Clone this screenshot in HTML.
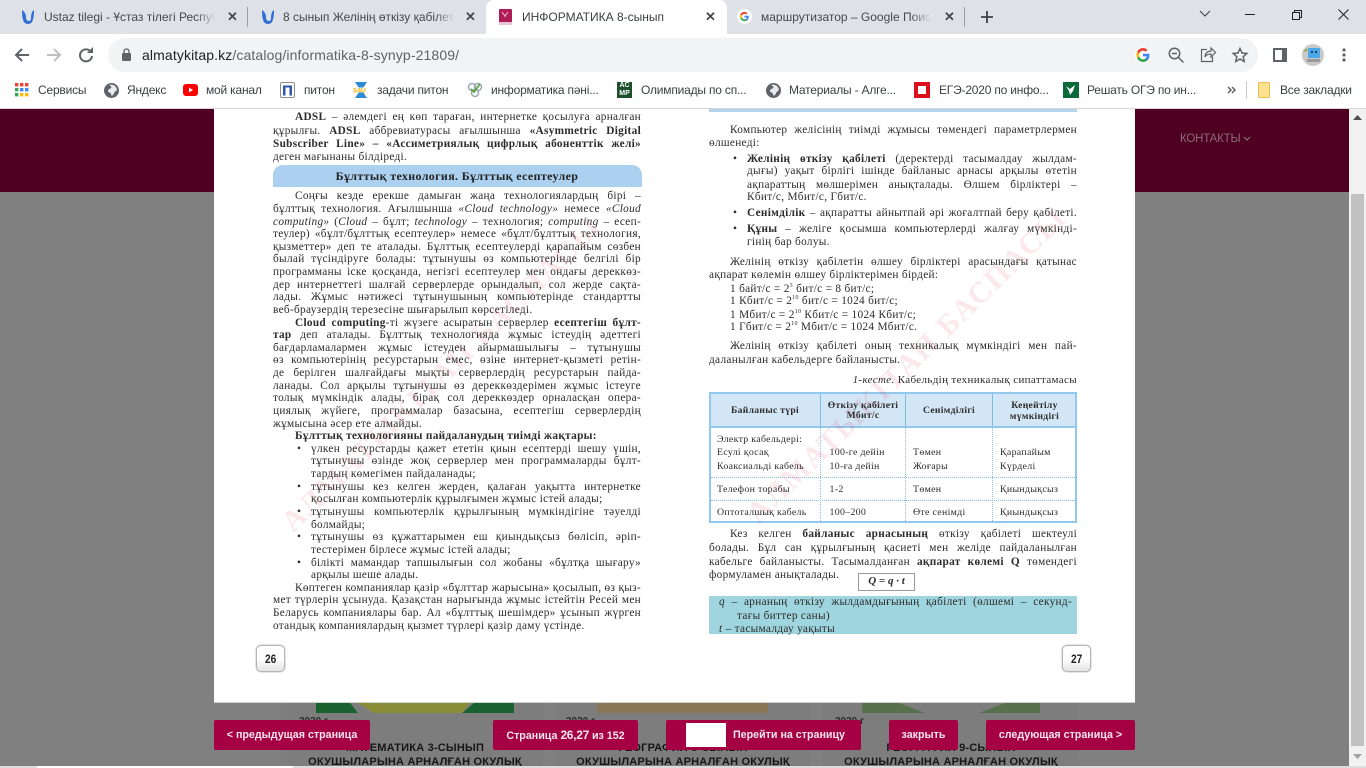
<!DOCTYPE html>
<html lang="kk"><head><meta charset="utf-8"><title>ИНФОРМАТИКА 8-сынып</title>
<style>
html,body{margin:0;padding:0;width:1366px;height:768px;overflow:hidden;background:#808080}
body{position:relative;font-family:"Liberation Sans","Noto Sans CJK SC",sans-serif}
.a{position:absolute}
svg.a{overflow:visible}
.tx{position:absolute;white-space:nowrap;color:#3c4043;font-size:12px;line-height:16px}
.tab{font-size:12px;top:9px;line-height:16px;color:#45484d;overflow:hidden}
.fade{position:absolute;top:8px;width:20px;height:18px;background:linear-gradient(90deg,rgba(222,225,230,0),#dee1e6)}
.bm{top:82px;font-size:12px;color:#3c4043;letter-spacing:-.2px}
.x{font-size:13px}
#pg{position:absolute;left:214px;top:108px;width:921px;height:595px;background:#fff}
#txt{position:absolute;left:0;top:0;width:1366px;height:768px;filter:blur(.3px);font-family:"Liberation Serif","Noto Serif CJK SC",serif;font-size:11.3px;letter-spacing:.3px;color:#2c2c2c}
#txt div{position:absolute;white-space:nowrap;height:13px;line-height:13px}
.L{left:273px;width:368px}.Li{left:295px;width:346px}.Lb{left:311px;width:330px}
.R{left:709px;width:368px}.Ri{left:730px;width:347px}.Rb{left:747px;width:330px}
.j{text-align:justify;text-align-last:justify}
#txt .c{font-size:9.9px;letter-spacing:.3px}
#txt .h{font-size:9.6px;font-weight:bold;text-align:center;letter-spacing:.3px}
sup{font-size:6px;line-height:0}
.num{position:absolute;width:27px;height:25px;border:1px solid #b5b5b5;border-radius:5px;background:linear-gradient(#fff 50%,#e4e4e4);font:bold 12px/26px "Liberation Sans",sans-serif;color:#222;text-align:center;box-shadow:0 0 1.5px #999}
.num span{display:inline-block;transform:scaleX(.85)}
.btn{position:absolute;top:720px;height:30px;line-height:31px;background:#a50044;border-radius:2px;color:#f6e6ec;font-size:10.7px;font-weight:bold;text-align:center;white-space:nowrap}
.ti{position:absolute;white-space:nowrap;font-weight:bold;font-size:11px;color:#161616;text-align:center;width:256px;height:14px;line-height:14px;letter-spacing:.2px}
</style></head><body>

<!-- page backdrop -->
<div class="a" style="left:0;top:108px;width:1349px;height:84px;background:#4f0021"></div>
<div class="a" style="left:1180px;top:131px;font-size:11.5px;letter-spacing:-.2px;line-height:16px;color:#8d6b79;white-space:nowrap">КОНТАКТЫ</div>
<svg class="a" style="left:1243px;top:136px" width="8" height="6"><path d="M1 1l3 3 3-3" fill="none" stroke="#8d6b79" stroke-width="1.2"/></svg>

<!-- cards behind -->
<div class="a" style="left:287px;top:703px;width:256px;height:65px;background:#7d7d7d"></div>
<div class="a" style="left:555px;top:703px;width:256px;height:65px;background:#7d7d7d"></div>
<div class="a" style="left:822px;top:703px;width:256px;height:65px;background:#7d7d7d"></div>
<svg class="a" style="left:316px;top:703px" width="198" height="10"><rect width="198" height="10" fill="#7d7d7d"/><path d="M0 0h34l8 10H0zM198 0h-40l-12 10h52z" fill="#19622f"/><path d="M42 0h112l-8 10H58z" fill="#8a8c37"/></svg>
<div class="a" style="left:597px;top:703px;width:171px;height:10px;background:#8a7656"></div>
<svg class="a" style="left:862px;top:703px" width="178" height="10"><rect width="178" height="10" fill="#56714c"/><path d="M37 0h106l-26 10H63z" fill="#7d7d7d"/></svg>
<div class="a" style="left:299px;top:716px;font-size:10px;font-weight:bold;color:#2c2c2c">2020 г</div>
<div class="a" style="left:566px;top:716px;font-size:10px;font-weight:bold;color:#2c2c2c">2020 г</div>
<div class="a" style="left:835px;top:716px;font-size:10px;font-weight:bold;color:#2c2c2c">2020 г</div>
<div class="ti" style="left:287px;top:741px">МАТЕМАТИКА 3-СЫНЫП</div>
<div class="ti" style="left:287px;top:755px">ОКУШЫЛАРЫНА АРНАЛҒАН ОКУЛЫҚ</div>
<div class="ti" style="left:555px;top:741px">ГЕОГРАФИЯ 8-СЫНЫП</div>
<div class="ti" style="left:555px;top:755px">ОКУШЫЛАРЫНА АРНАЛҒАН ОКУЛЫҚ</div>
<div class="ti" style="left:823px;top:741px">ГЕОГРАФИЯ 9-СЫНЫП</div>
<div class="ti" style="left:823px;top:755px">ОКУШЫЛАРЫНА АРНАЛҒАН ОКУЛЫҚ</div>
<div class="a" style="left:0;top:766px;width:1366px;height:2px;background:#dcdcdc"></div>
<div class="a" style="left:37px;top:766px;width:256px;height:2px;background:#fff"></div>

<!-- scrollbar -->
<div class="a" style="left:1349px;top:108px;width:17px;height:658px;background:#f1f1f1"></div>
<div class="a" style="left:1351px;top:194px;width:13px;height:552px;background:#c1c1c1"></div>
<svg class="a" style="left:1353px;top:115px" width="9" height="6"><path d="M4.500 0L9 5H0z" fill="#505050"/></svg>
<svg class="a" style="left:1353px;top:754px" width="9" height="6"><path d="M4.500 5L9 0H0z" fill="#a3a3a3"/></svg>

<!-- book page -->
<div id="pg"></div>
<div class="a" style="left:214px;top:702px;width:921px;height:1px;background:#cfcfcf"></div>
<div class="a" style="left:709px;top:108px;width:368px;height:4px;background:#b4d4ee"></div>
<div class="a" style="left:273px;top:165px;width:369px;height:22px;background:#acd0ef;border-radius:10px 10px 0 0"></div>
<div class="a" style="left:709px;top:392px;width:364px;height:127px;border:2px solid #92c8ee"></div>
<div class="a" style="left:711px;top:394px;width:364px;height:32px;background:#d3e6f6;border-bottom:2px solid #92c8ee"></div>
<div class="a" style="left:820px;top:394px;height:32px;width:1px;background:#7fbde8"></div>
<div class="a" style="left:905px;top:394px;height:32px;width:1px;background:#7fbde8"></div>
<div class="a" style="left:992px;top:394px;height:32px;width:1px;background:#7fbde8"></div>
<div class="a" style="left:820px;top:428px;height:93px;border-left:1px dotted #80bde6"></div>
<div class="a" style="left:905px;top:428px;height:93px;border-left:1px dotted #80bde6"></div>
<div class="a" style="left:992px;top:428px;height:93px;border-left:1px dotted #80bde6"></div>
<div class="a" style="left:711px;top:477px;width:364px;border-top:1px dotted #80bde6"></div>
<div class="a" style="left:711px;top:500px;width:364px;border-top:1px dotted #80bde6"></div>
<div class="a" style="left:858px;top:573px;width:55px;height:16px;border:1px solid #9a9a9a;background:#fff"></div>
<div class="a" style="left:709px;top:596px;width:368px;height:38px;background:#9fd5df"></div>

<!-- watermarks -->
<div class="a" style="left:287px;top:527px;width:1px;height:1px;transform:rotate(-44.5deg);transform-origin:0 0;white-space:nowrap;font:bold 30px/0 'Liberation Serif',serif;letter-spacing:1.8px;color:rgba(205,30,70,.1)">АЛМАТЫКІТАП БАСПАСЫ</div>
<div class="a" style="left:752px;top:518px;width:1px;height:1px;transform:rotate(-44.5deg);transform-origin:0 0;white-space:nowrap;font:bold 30px/0 'Liberation Serif',serif;letter-spacing:1.8px;color:rgba(205,30,70,.1)">АЛМАТЫКІТАП БАСПАСЫ</div>

<div id="txt">
<div class="Li j" style="top:111px"><b>ADSL</b> – әлемдегі ең көп тараған, интернетке қосылуға арналған</div>
<div class="L j" style="top:124.5px">құрылғы. <b>ADSL</b> аббревиатурасы ағылшынша <b>«Asymmetric Digital</b></div>
<div class="L j" style="top:137.5px"><b>Subscriber Line» – «Ассиметриялық цифрлық абоненттік желі»</b></div>
<div class="L" style="top:150.5px">деген мағынаны білдіреді.</div>
<div class="L" style="top:169.5px;text-align:center;font-weight:bold;font-size:12px;letter-spacing:.35px;color:#222">Бұлттық технология. Бұлттық есептеулер</div>

<div class="Li j" style="top:190.2px">Соңғы кезде ерекше дамыған жаңа технологиялардың бірі –</div>
<div class="L j" style="top:202.8px">бұлттық технология. Ағылшынша <i>«Cloud technology»</i> немесе <i>«Cloud</i></div>
<div class="L j" style="top:215.5px"><i>computing»</i> (<i>Cloud</i> – бұлт; <i>technology</i> – технология; <i>computing</i> – есеп-</div>
<div class="L j" style="top:228.1px">теулер) «бұлт/бұлттық есептеулер» немесе «бұлт/бұлттық технология,</div>
<div class="L j" style="top:240.7px">қызметтер» деп те аталады. Бұлттық есептеулерді қарапайым сөзбен</div>
<div class="L j" style="top:253.4px">былай түсіндіруге болады: тұтынушы өз компьютерінде белгілі бір</div>
<div class="L j" style="top:266px">программаны іске қосқанда, негізгі есептеулер мен ондағы дереккөз-</div>
<div class="L j" style="top:278.6px">дер интернеттегі шалғай серверлерде орындалып, сол жерде сақта-</div>
<div class="L j" style="top:291.2px">лады. Жұмыс нәтижесі тұтынушының компьютерінде стандартты</div>
<div class="L" style="top:303.9px">веб-браузердің терезесіне шығарылып көрсетіледі.</div>
<div class="Li j" style="top:316.5px"><b>Cloud computing</b>-ті жүзеге асыратын серверлер <b>есептегіш бұлт-</b></div>
<div class="L j" style="top:329.1px"><b>тар</b> деп аталады. Бұлттық технологияда жұмыс істеудің әдеттегі</div>
<div class="L j" style="top:341.8px">бағдарламалармен жұмыс істеуден айырмашылығы – тұтынушы</div>
<div class="L j" style="top:354.4px">өз компьютерінің ресурстарын емес, өзіне интернет-қызметі ретін-</div>
<div class="L j" style="top:367px">де берілген шалғайдағы мықты серверлердің ресурстарын пайда-</div>
<div class="L j" style="top:379.7px">ланады. Сол арқылы тұтынушы өз дереккөздерімен жұмыс істеуге</div>
<div class="L j" style="top:392.3px">толық мүмкіндік алады, бірақ сол дереккөздер орналасқан опера-</div>
<div class="L j" style="top:404.9px">циялық жүйеге, программалар базасына, есептегіш серверлердің</div>
<div class="L" style="top:417.5px">жұмысына әсер ете алмайды.</div>
<div class="Li" style="top:430.2px"><b>Бұлттық технологияны пайдаланудың тиімді жақтары:</b></div>
<div style="left:297px;top:442.8px">•</div>
<div class="Lb j" style="top:442.8px">үлкен ресурстарды қажет ететін қиын есептерді шешу үшін,</div>
<div class="Lb j" style="top:455.4px">тұтынушы өзінде жоқ серверлер мен программаларды бұлт-</div>
<div class="Lb" style="top:468.1px">тардың көмегімен пайдаланады;</div>
<div style="left:297px;top:480.7px">•</div>
<div class="Lb j" style="top:480.7px">тұтынушы кез келген жерден, қалаған уақытта интернетке</div>
<div class="Lb" style="top:493.3px">қосылған компьютерлік құрылғымен жұмыс істей алады;</div>
<div style="left:297px;top:506px">•</div>
<div class="Lb j" style="top:506px">тұтынушы компьютерлік құрылғының мүмкіндігіне тәуелді</div>
<div class="Lb" style="top:518.6px">болмайды;</div>
<div style="left:297px;top:531.2px">•</div>
<div class="Lb j" style="top:531.2px">тұтынушы өз құжаттарымен еш қиындықсыз бөлісіп, әріп-</div>
<div class="Lb" style="top:543.8px">тестерімен бірлесе жұмыс істей алады;</div>
<div style="left:297px;top:556.5px">•</div>
<div class="Lb j" style="top:556.5px">білікті мамандар тапшылығын сол жобаны «бұлтқа шығару»</div>
<div class="Lb" style="top:569.1px">арқылы шеше алады.</div>
<div class="Li j" style="top:581.7px">Көптеген компаниялар қазір «бұлттар жарысына» қосылып, өз қыз-</div>
<div class="L j" style="top:594.4px">мет түрлерін ұсынуда. Қазақстан нарығында жұмыс істейтін Ресей мен</div>
<div class="L j" style="top:607px">Беларусь компаниялары бар. Ал «бұлттық шешімдер» ұсынып жүрген</div>
<div class="L" style="top:619.6px">отандық компаниялардың қызмет түрлері қазір даму үстінде.</div>

<div class="Ri j" style="top:124.2px">Компьютер желісінің тиімді жұмысы төмендегі параметрлермен</div>
<div class="R" style="top:136.8px">өлшенеді:</div>
<div style="left:733px;top:152.5px">•</div>
<div class="Rb j" style="top:152.5px"><b>Желінің өткізу қабілеті</b> (деректерді тасымалдау жылдам-</div>
<div class="Rb j" style="top:165.2px">дығы) уақыт бірлігі ішінде байланыс арнасы арқылы өтетін</div>
<div class="Rb j" style="top:178.5px">ақпараттың мөлшерімен анықталады. Өлшем бірліктері –</div>
<div class="Rb" style="top:191.2px">Кбит/с, Мбит/с, Гбит/с.</div>
<div style="left:733px;top:206.8px">•</div>
<div class="Rb j" style="top:206.8px"><b>Сенімділік</b> – ақпаратты айнытпай әрі жоғалтпай беру қабілеті.</div>
<div style="left:733px;top:222.5px">•</div>
<div class="Rb j" style="top:222.5px"><b>Құны</b> – желіге қосымша компьютерлерді жалғау мүмкінді-</div>
<div class="Rb" style="top:235.8px">гінің бар болуы.</div>
<div class="Ri j" style="top:255.8px">Желінің өткізу қабілетін өлшеу бірліктері арасындағы қатынас</div>
<div class="R" style="top:269.2px">ақпарат көлемін өлшеу бірліктерімен бірдей:</div>
<div class="Ri" style="top:282.5px">1 байт/с = 2<sup>3</sup> бит/с = 8 бит/с;</div>
<div class="Ri" style="top:295.2px">1 Кбит/с = 2<sup>10</sup> бит/с = 1024 бит/с;</div>
<div class="Ri" style="top:308.5px">1 Мбит/с = 2<sup>10</sup> Кбит/с = 1024 Кбит/с;</div>
<div class="Ri" style="top:321.2px">1 Гбит/с = 2<sup>10</sup> Мбит/с = 1024 Мбит/с.</div>
<div class="Ri j" style="top:340.2px">Желінің өткізу қабілеті оның техникалық мүмкіндігі мен пай-</div>
<div class="R" style="top:353.5px">даланылған кабельдерге байланысты.</div>
<div class="R" style="top:373.5px;text-align:right;font-size:11px;letter-spacing:.35px"><i>1-кесте.</i> Кабельдің техникалық сипаттамасы</div>

<div class="h" style="left:710px;width:110px;top:403.5px">Байланыс түрі</div>
<div class="h" style="left:821px;width:84px;top:398.5px">Өткізу қабілеті</div>
<div class="h" style="left:821px;width:84px;top:409px">Мбит/с</div>
<div class="h" style="left:906px;width:86px;top:403.5px">Сенімділігі</div>
<div class="h" style="left:993px;width:83px;top:398.5px">Кеңейтілу</div>
<div class="h" style="left:993px;width:83px;top:409.5px">мүмкіндігі</div>
<div class="c" style="left:717px;top:432.5px">Электр кабельдері:</div>
<div class="c" style="left:717px;top:446.2px">Есулі қосақ</div>
<div class="c" style="left:717px;top:460.2px">Коаксиальді кабель</div>
<div class="c" style="left:717px;top:482.8px">Телефон торабы</div>
<div class="c" style="left:717px;top:505.5px">Оптоталшық кабель</div>
<div class="c" style="left:829.5px;top:446.2px">100-ге дейін</div>
<div class="c" style="left:829.5px;top:460.2px">10-ға дейін</div>
<div class="c" style="left:829.5px;top:482.8px">1-2</div>
<div class="c" style="left:829.5px;top:505.5px">100–200</div>
<div class="c" style="left:913px;top:446.2px">Төмен</div>
<div class="c" style="left:913px;top:460.2px">Жоғары</div>
<div class="c" style="left:913px;top:482.8px">Төмен</div>
<div class="c" style="left:913px;top:505.5px">Өте сенімді</div>
<div class="c" style="left:1000px;top:446.2px">Қарапайым</div>
<div class="c" style="left:1000px;top:460.2px">Күрделі</div>
<div class="c" style="left:1000px;top:482.8px">Қиындықсыз</div>
<div class="c" style="left:1000px;top:505.5px">Қиындықсыз</div>

<div class="Ri j" style="top:527.8px">Кез келген <b>байланыс арнасының</b> өткізу қабілеті шектеулі</div>
<div class="R j" style="top:542.2px">болады. Бұл сан құрылғының қасиеті мен желіде пайдаланылған</div>
<div class="R j" style="top:555.8px">кабельге байланысты. Тасымалданған <b>ақпарат көлемі Q</b> төмендегі</div>
<div class="R" style="top:569.2px">формуламен анықталады.</div>
<div style="left:858px;width:57px;top:575px;text-align:center;font-weight:bold;font-style:italic;font-size:11px;letter-spacing:0">Q = q · t</div>
<div style="left:719px;width:353px;top:596.2px" class="j"><i>q</i> – арнаның өткізу жылдамдығының қабілеті (өлшемі – секунд-</div>
<div style="left:737px;top:609.5px">тағы биттер саны)</div>
<div style="left:719px;top:622.8px"><i>t</i> – тасымалдау уақыты</div>
</div>

<div class="num" style="left:256px;top:645px"><span>26</span></div>
<div class="num" style="left:1062px;top:645px"><span>27</span></div>

<!-- bottom nav -->
<div class="btn" style="left:214px;width:156px">&lt; предыдущая страница</div>
<div class="btn" style="left:493px;width:145px">Страница <span style="font-size:12px;letter-spacing:-.3px">26,27</span> из 152</div>
<div class="btn" style="left:666px;width:195px;text-align:left;text-indent:67px">Перейти на страницу</div>
<div class="a" style="left:686px;top:723px;width:40px;height:24px;background:#fff"></div>
<div class="btn" style="left:889px;width:69px">закрыть</div>
<div class="btn" style="left:986px;width:149px">следующая страница &gt;</div>

<!-- browser chrome -->
<div class="a" style="left:0;top:0;width:1366px;height:34px;background:#dee1e6"></div>
<div class="a" style="left:0;top:34px;width:1366px;height:74px;background:#fff"></div>
<div class="a" style="left:0;top:107.5px;width:1366px;height:1px;background:#d6d6d6"></div>
<div class="a" style="left:486px;top:0;width:241px;height:34px;background:#fff;border-radius:8px 8px 0 0"></div>
<div class="a" style="left:247px;top:7px;width:1px;height:20px;background:#9aa0a6"></div>
<div class="a" style="left:964px;top:7px;width:1px;height:20px;background:#9aa0a6"></div>

<svg class="a" style="left:21px;top:9px" width="14" height="16" viewBox="0 0 14 16"><path d="M1 1c0 8 1 14 6 14s6-6 6-14c-2 1-3 4-3 8 0 2-1 3-2.500 3S5 10 5 8C5 5 3 2 1 1z" fill="#2f6fd6"/></svg>
<div class="tx tab" style="left:44px;width:170px">Ustaz tilegi - Ұстаз тілегі Респуб</div>
<div class="fade" style="left:196px"></div>
<div class="tx x" style="left:227px;top:9px;font-weight:bold;color:#45484d">✕</div>
<svg class="a" style="left:261px;top:9px" width="14" height="16" viewBox="0 0 14 16"><path d="M1 1c0 8 1 14 6 14s6-6 6-14c-2 1-3 4-3 8 0 2-1 3-2.500 3S5 10 5 8C5 5 3 2 1 1z" fill="#2f6fd6"/></svg>
<div class="tx tab" style="left:283px;width:170px">8 сынып Желінің өткізу қабілет</div>
<div class="fade" style="left:435px"></div>
<div class="tx x" style="left:465px;top:9px;font-weight:bold;color:#45484d">✕</div>
<svg class="a" style="left:498px;top:8px" width="15" height="18" viewBox="0 0 15 18"><rect x="1" y="1" width="13" height="16" rx="1" fill="#b01c56"/><rect x="1" y="14" width="13" height="3" fill="#e8c3d3"/><path d="M4 4l3 4 3-4M7 8v1" stroke="#f2c6d6" fill="none"/></svg>
<div class="tx tab" style="left:522px;color:#3c4043;width:170px">ИНФОРМАТИКА 8-сынып</div>
<div class="tx x" style="left:705px;top:9px;font-weight:bold;color:#45484d">✕</div>
<svg class="a" style="left:737px;top:9px" width="15" height="15" viewBox="0 0 16 16"><circle cx="8" cy="8" r="8" fill="#fff"/><path d="M12.600 8.200c0-.4 0-.7-.1-1H8v1.900h2.600c-.1.600-.5 1.200-1 1.500v1.200h1.600c1-.9 1.400-2.200 1.400-3.600z" fill="#4285f4"/><path d="M8 13c1.300 0 2.400-.4 3.200-1.200l-1.600-1.200c-.4.300-1 .5-1.600.5-1.300 0-2.300-.8-2.700-2H3.700v1.300C4.500 12 6.100 13 8 13z" fill="#34a853"/><path d="M5.300 9.100c-.2-.7-.2-1.400 0-2.100V5.700H3.700c-.7 1.400-.7 3.200 0 4.600z" fill="#fbbc05"/><path d="M8 5.200c.7 0 1.300.3 1.800.7l1.400-1.400C10.400 3.600 9.200 3 8 3 6.100 3 4.500 4 3.700 5.700L5.300 7c.4-1.100 1.400-1.800 2.700-1.800z" fill="#ea4335"/></svg>
<div class="tx tab" style="left:761px;width:170px">маршрутизатор – Google Поиск</div>
<div class="fade" style="left:911px"></div>
<div class="tx x" style="left:944px;top:9px;font-weight:bold;color:#45484d">✕</div>
<svg class="a" style="left:980px;top:10px" width="14" height="14"><path d="M7 1v12M1 7h12" stroke="#3c4043" stroke-width="1.800"/></svg>

<svg class="a" style="left:1199px;top:10px" width="12" height="8"><path d="M1 1l5 5 5-5" fill="none" stroke="#3c4043"/></svg>
<div class="a" style="left:1245px;top:14px;width:10px;height:1px;background:#202124"></div>
<svg class="a" style="left:1291px;top:9px" width="12" height="12"><path d="M1.500 3.500h7v7h-7zM3.500 3.500v-2h7v7h-2" fill="none" stroke="#202124"/></svg>
<svg class="a" style="left:1338px;top:9px" width="11" height="11"><path d="M.5.500l10 10M10.500.500l-10 10" stroke="#202124"/></svg>

<svg class="a" style="left:14px;top:47px" width="16" height="16"><path d="M15 8H2M8 2L2 8l6 6" fill="none" stroke="#5f6368" stroke-width="2"/></svg>
<svg class="a" style="left:46px;top:47px" width="16" height="16"><path d="M1 8h13M8 2l6 6-6 6" fill="none" stroke="#bdc1c6" stroke-width="2"/></svg>
<svg class="a" style="left:78px;top:47px" width="16" height="16"><path d="M13 5A6 6 0 1 0 14 9" fill="none" stroke="#5f6368" stroke-width="2"/><path d="M9 6h6V0z" fill="#5f6368"/></svg>

<div class="a" style="left:108px;top:38px;width:1150px;height:34px;background:#f1f3f4;border-radius:17px"></div>
<svg class="a" style="left:122px;top:48px" width="9" height="13"><rect y="5" width="9" height="8" rx="1" fill="#5f6368"/><path d="M2 6V3.500a2.500 2.500 0 0 1 5 0V6" fill="none" stroke="#5f6368" stroke-width="1.300"/></svg>
<div class="tx" style="left:142px;top:47px;font-size:14px;letter-spacing:.12px;color:#202124">almatykitap.kz<span style="color:#5f6368">/catalog/informatika-8-synyp-21809/</span></div>

<svg class="a" style="left:1135px;top:47px" width="16" height="16" viewBox="0 0 16 16"><circle cx="8" cy="8" r="8" fill="#fff"/><path d="M14.600 8.200c0-.5 0-.9-.1-1.400H8v2.600h3.700c-.2.900-.7 1.600-1.400 2.100v1.700h2.300c1.300-1.200 2-3 2-5z" fill="#4285f4"/><path d="M8 15c1.900 0 3.400-.6 4.600-1.700l-2.300-1.700c-.6.400-1.400.7-2.300.7-1.800 0-3.300-1.200-3.800-2.800H2.100v1.800C3.200 13.500 5.400 15 8 15z" fill="#34a853"/><path d="M4.200 9.500c-.3-.9-.3-1.900 0-2.900V4.800H2.100c-1 1.900-1 4.500 0 6.400z" fill="#fbbc05"/><path d="M8 3.800c1 0 1.900.4 2.600 1l2-2C11.400 1.700 9.800 1 8 1 5.400 1 3.200 2.500 2.100 4.800l2.100 1.800C4.700 5 6.200 3.800 8 3.800z" fill="#ea4335"/></svg>
<svg class="a" style="left:1168px;top:47px" width="16" height="16"><circle cx="6.500" cy="6.500" r="5.200" fill="none" stroke="#5f6368" stroke-width="1.500"/><path d="M10.500 10.500l5 5M4 6.500h5" stroke="#5f6368" stroke-width="1.500"/></svg>
<svg class="a" style="left:1200px;top:46px" width="16" height="17"><path d="M7 3.500H1.500v12h11v-5" fill="none" stroke="#5f6368" stroke-width="1.200"/><path d="M5 11c0-4 3-6 6-6V2l4.500 4.500L11 11V8c-3 0-5 1-6 3z" fill="none" stroke="#5f6368" stroke-width="1.200"/></svg>
<svg class="a" style="left:1232px;top:47px" width="16" height="16"><path d="M8 1.500l2 4.500 4.800.5-3.600 3.200 1 4.800L8 12l-4.200 2.500 1-4.800L1.200 6.500 6 6z" fill="none" stroke="#5f6368" stroke-width="1.500"/></svg>
<svg class="a" style="left:1273px;top:48px" width="14" height="14"><rect width="14" height="14" fill="#5f6368"/><rect x="2" y="2" width="7" height="10" fill="#fff"/></svg>
<svg class="a" style="left:1302px;top:44px" width="22" height="22"><circle cx="11" cy="11" r="11" fill="#c9c9c9"/><rect x="6" y="4" width="12" height="10" rx="1" fill="#4aa7e8"/><circle cx="10" cy="8" r="1" fill="#123"/><circle cx="14" cy="8" r="1" fill="#123"/><rect x="5" y="15" width="13" height="3" fill="#999"/><path d="M1 7l4-3v4z" fill="#8fb04b"/></svg>
<svg class="a" style="left:1342px;top:48px" width="4" height="14"><circle cx="2" cy="2" r="1.600" fill="#5f6368"/><circle cx="2" cy="7" r="1.600" fill="#5f6368"/><circle cx="2" cy="12" r="1.600" fill="#5f6368"/></svg>

<!-- bookmarks -->
<svg class="a" style="left:15px;top:83px" width="14" height="14"><g fill="#ea4335"><rect width="3.400" height="3.400"/><rect x="5" width="3.400" height="3.400"/><rect x="10" width="3.400" height="3.400"/></g><g fill="#34a853"><rect y="5" width="3.400" height="3.400"/><rect y="10" width="3.400" height="3.400" /></g><g fill="#4285f4"><rect x="5" y="5" width="3.400" height="3.400"/><rect x="10" y="5" width="3.400" height="3.400"/></g><g fill="#fbbc05"><rect x="5" y="10" width="3.400" height="3.400"/><rect x="10" y="10" width="3.400" height="3.400"/></g></svg>
<div class="tx bm" style="left:38px">Сервисы</div>
<svg class="a" style="left:104px;top:83px" width="15" height="15"><circle cx="7.500" cy="7.500" r="7.500" fill="#5f6368"/><path d="M5 2c2 1 3 2 2 3S4 6 4 8s3 1 3 3 1 2 2 1 1-3 3-4 0-4-1-5-4-2-6-1z" fill="#e8eaed"/></svg>
<div class="tx bm" style="left:127px">Яндекс</div>
<svg class="a" style="left:183px;top:84px" width="15" height="12"><rect width="15" height="12" rx="3" fill="#f00"/><path d="M6 3.500l4 2.500-4 2.500z" fill="#fff"/></svg>
<div class="tx bm" style="left:206px">мой канал</div>
<svg class="a" style="left:280px;top:82px" width="15" height="16"><rect x=".5" y=".5" width="14" height="15" rx="1.500" fill="#fff" stroke="#8a8f96"/><path d="M3 3.500h9v10H9.500V5.500h-4v8H3z" fill="#2f56a8"/></svg>
<div class="tx bm" style="left:304px">питон</div>
<svg class="a" style="left:353px;top:82px" width="16" height="16"><path d="M2 0h12l-4 6H6zM2 16h12l-4-6H6z" fill="#2f8bd8"/><rect y="5.500" width="16" height="5" fill="#fff"/><text x="0" y="10.500" font-family="Liberation Sans" font-size="6.500" font-weight="bold" fill="#e8b400">S4U</text></svg>
<div class="tx bm" style="left:377px">задачи питон</div>
<svg class="a" style="left:467px;top:82px" width="16" height="16"><circle cx="5" cy="5" r="3.500" fill="none" stroke="#9aa7b5" stroke-width="1.500"/><circle cx="11" cy="5" r="3.500" fill="none" stroke="#9aa7b5" stroke-width="1.500"/><circle cx="8" cy="11" r="3.500" fill="none" stroke="#9aa7b5" stroke-width="1.500"/><path d="M4 7l3 3 6-8" fill="none" stroke="#5aa63c" stroke-width="1.800"/></svg>
<div class="tx bm" style="left:491px">информатика пәні...</div>
<div class="a" style="left:617px;top:82px;width:15px;height:16px;background:#1d4f2a;color:#fff;font-size:7px;font-weight:bold;line-height:8px;text-align:center">AC<br>MP</div>
<div class="tx bm" style="left:641px">Олимпиады по сп...</div>
<svg class="a" style="left:766px;top:83px" width="15" height="15"><circle cx="7.500" cy="7.500" r="7.500" fill="#5f6368"/><path d="M5 2c2 1 3 2 2 3S4 6 4 8s3 1 3 3 1 2 2 1 1-3 3-4 0-4-1-5-4-2-6-1z" fill="#e8eaed"/></svg>
<div class="tx bm" style="left:789px">Материалы - Алге...</div>
<svg class="a" style="left:914px;top:82px" width="16" height="16"><rect width="16" height="16" fill="#d90f1c"/><rect x="4" y="4" width="8" height="8" fill="#fff"/></svg>
<div class="tx bm" style="left:939px">ЕГЭ-2020 по инфо...</div>
<svg class="a" style="left:1063px;top:82px" width="16" height="16"><rect width="16" height="16" fill="#0b6a3a"/><path d="M3 4l4 3 5-4-2 6-3 4-1-4z" fill="#fff"/></svg>
<div class="tx bm" style="left:1087px">Решать ОГЭ по ин...</div>
<svg class="a" style="left:1227px;top:86px" width="10" height="8"><path d="M1 1l3 3-3 3M5 1l3 3-3 3" fill="none" stroke="#5f6368" stroke-width="1.500"/></svg>
<div class="a" style="left:1246px;top:81px;width:1px;height:18px;background:#c8cacd"></div>
<svg class="a" style="left:1258px;top:82px" width="12" height="16"><rect x=".5" y=".5" width="11" height="15" rx="1" fill="#fde293" stroke="#eabf4a"/></svg>
<div class="tx bm" style="left:1280px">Все закладки</div>
</body></html>
